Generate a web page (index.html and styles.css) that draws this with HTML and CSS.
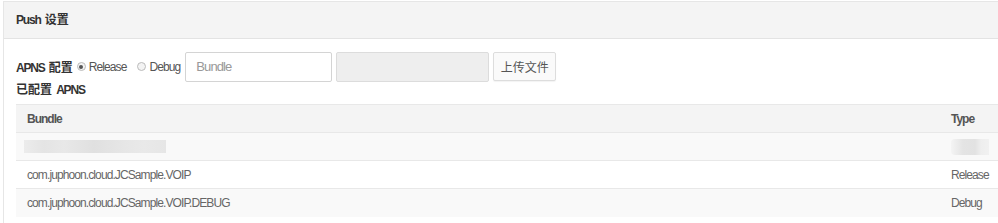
FILE: index.html
```html
<!DOCTYPE html>
<html lang="zh">
<head>
    <meta charset="UTF-8">
    <title>Push 设置</title>
    <link rel="stylesheet" href="styles.css">
</head>
<body>
    <div class="panel">
        <!-- Header -->
        <div class="panel-heading">Push <span class="zh">设置</span></div>

        <div class="panel-body">
            <!-- APNS form -->
            <div class="form-row">
                <span class="label">APNS <span class="zh">配置</span></span>
                <label class="radio"><span class="dot checked"></span>Release</label>
                <label class="radio"><span class="dot"></span>Debug</label>
                <input type="text" class="bundle-input" placeholder="Bundle">
                <div class="file-box"></div>
                <button class="btn-upload">上传文件</button>
            </div>

            <div class="label sub-title"><span class="zh">已配置</span> APNS</div>

            <!-- Configured list -->
            <table class="apns-table">
                <thead>
                    <tr>
                        <th>Bundle</th>
                        <th class="col-type">Type</th>
                    </tr>
                </thead>
                <tbody>
                    <tr>
                        <td><div class="blur blur-wide"></div></td>
                        <td class="col-type"><div class="blur blur-small"></div></td>
                    </tr>
                    <tr>
                        <td>com.juphoon.cloud.JCSample.VOIP</td>
                        <td class="col-type">Release</td>
                    </tr>
                    <tr>
                        <td>com.juphoon.cloud.JCSample.VOIP.DEBUG</td>
                        <td class="col-type">Debug</td>
                    </tr>
                </tbody>
            </table>
        </div>
    </div>
</body>
</html>
```

FILE: styles.css
```css
* {
    margin: 0;
    padding: 0;
    box-sizing: border-box;
}

body {
    font-family: "Liberation Sans", "Noto Sans CJK SC", sans-serif;
    font-size: 12px;
    letter-spacing: -0.9px;
    color: #555;
    background: #fff;
    overflow: hidden;
}

.zh {
    letter-spacing: 0;
}

.panel {
    width: 1010px;
    margin: 1px 0 0 3px;
    border: 1px solid #e6e6e6;
    border-bottom: none;
    min-height: 230px;
}

.panel-heading {
    height: 37px;
    line-height: 36px;
    padding-left: 12px;
    background: #f4f4f4;
    border-bottom: 1px solid #e3e3e3;
    font-weight: bold;
    letter-spacing: -1.2px;
    word-spacing: 2px;
    color: #333;
}

.panel-body {
    padding: 12px 12px 0 12px;
}

.form-row {
    display: flex;
    align-items: center;
    height: 31px;
}

.label {
    font-weight: bold;
    letter-spacing: -1.2px;
    word-spacing: 2px;
    color: #333;
}

.radio {
    display: flex;
    align-items: center;
    margin-left: 4px;
    color: #555;
}

.radio + .radio {
    margin-left: 11px;
}

.dot {
    width: 9px;
    height: 9px;
    border: 1px solid #bbb;
    border-radius: 50%;
    margin-right: 3px;
    background: #f3f3f3;
    position: relative;
}

.dot.checked::after {
    content: "";
    position: absolute;
    left: 1.5px;
    top: 1.5px;
    width: 4px;
    height: 4px;
    border-radius: 50%;
    background: #555;
}

.bundle-input {
    margin-left: 5px;
    width: 147px;
    height: 30px;
    border: 1px solid #d4d4d4;
    border-radius: 2px;
    padding: 0 10px;
    font-family: inherit;
    font-size: 13px;
    letter-spacing: -0.9px;
    outline: none;
}

.bundle-input::placeholder {
    color: #999;
}

.file-box {
    margin-left: 4px;
    width: 153px;
    height: 30px;
    background: #eee;
    border: 1px solid #dcdcdc;
    border-radius: 2px;
}

.btn-upload {
    margin-left: 4px;
    width: 63px;
    height: 29px;
    background: #fafafa;
    border: 1px solid #ddd;
    border-radius: 2px;
    font-family: "Noto Sans CJK SC", sans-serif;
    font-size: 12px;
    letter-spacing: 0;
    color: #555;
    box-shadow: 0 1px 1px rgba(0,0,0,0.05);
}

.sub-title {
    height: 16px;
    line-height: 16px;
}

.apns-table {
    width: 100%;
    margin-top: 6px;
    border-collapse: collapse;
    table-layout: fixed;
}

.apns-table th,
.apns-table td {
    height: 28px;
    padding: 0 11px;
    text-align: left;
    border-top: 1px solid #e8e8e8;
    white-space: nowrap;
}

.apns-table th {
    background: #f4f4f4;
    font-weight: bold;
    letter-spacing: -1px;
    color: #555;
}

.apns-table td {
    color: #666;
}

.apns-table tbody tr:nth-child(odd) {
    background: #f9f9f9;
}

.apns-table .col-type {
    width: 60px;
}

.blur {
    height: 13px;
    background: #e6e6e6;
}

.blur-wide {
    width: 142px;
    margin-left: -3px;
    background: linear-gradient(90deg, #ececec 0, #e4e4e4 20px, #e8e8e8 40px, #e0e0e0 70px, #e6e6e6 100px, #e9e9e9 120px, #e6e6e6 142px);
}

.blur-small {
    width: 38px;
    height: 16px;
    background: linear-gradient(90deg, #f4f4f4 0, #e4e4e4 12px, #e2e2e2 24px, #eeeeee 30px, #f1f1f1 38px);
    border-radius: 4px 0 0 4px;
}
```
